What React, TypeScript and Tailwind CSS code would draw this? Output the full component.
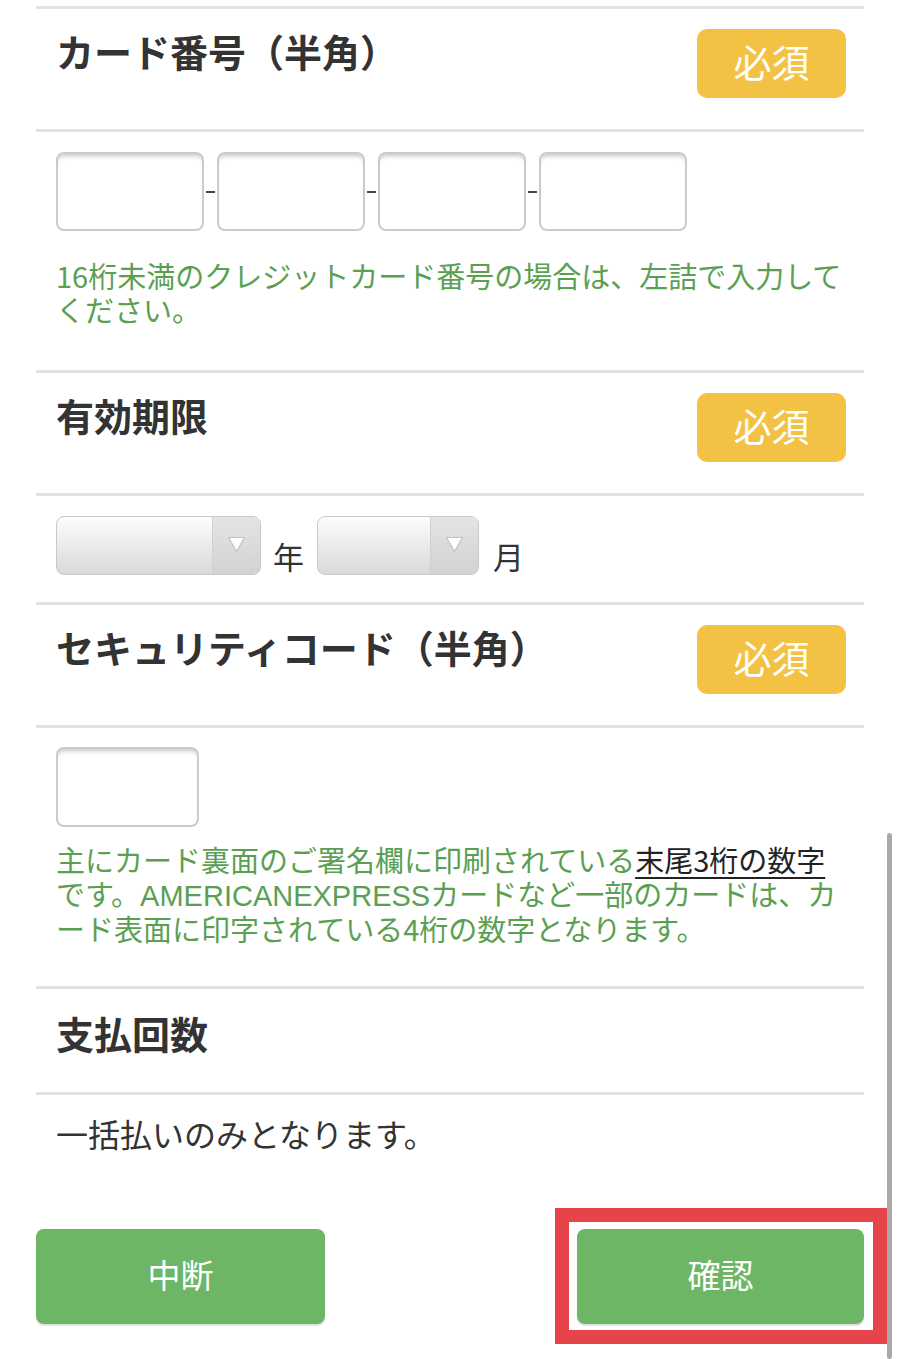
import React from "react";

const JP = '"Noto Sans CJK JP", "Noto Sans CJK SC", sans-serif';

function Divider() {
  return <div className="h-[3px] bg-[#e2e2e2]" />;
}

function Badge() {
  return (
    <div className="flex h-[69px] w-[149px] shrink-0 items-center justify-center rounded-[10px] bg-[#f3c244] pb-[6px] text-[38px] leading-none text-white">
      必須
    </div>
  );
}

function Header({ title }: { title: string }) {
  return (
    <div className="flex items-start justify-between pb-[31px] pl-[20px] pr-[18px] pt-[20px]">
      <h2 className="mt-[3px] text-[38px] font-bold leading-none text-[#333333]">{title}</h2>
      <Badge />
    </div>
  );
}

function Box({ className }: { className: string }) {
  return (
    <div
      className={
        "rounded-[8px] border-2 border-[#cbcbcb] bg-white shadow-[inset_0_5px_4px_-3px_rgba(0,0,0,0.22)] " +
        className
      }
    />
  );
}

function Dash() {
  return <div className="mx-[2px] h-[2px] w-[9px] bg-[#444444]" />;
}

function Arrow() {
  return (
    <svg width="19" height="17" viewBox="0 0 19 17">
      <path d="M1.5 1.5 L17.5 1.5 L9.5 15.5 Z" fill="#ffffff" stroke="#c2c2c2" strokeWidth="1.2" strokeLinejoin="round" />
    </svg>
  );
}

function Select({ wide }: { wide: boolean }) {
  return (
    <div
      className={
        wide
          ? "flex h-[59px] w-[205px] overflow-hidden rounded-[8px] border-[1.5px] border-[#c9c9c9] bg-[linear-gradient(to_bottom,#fdfdfd,#d9d9d9)]"
          : "flex h-[59px] w-[162px] overflow-hidden rounded-[8px] border-[1.5px] border-[#c9c9c9] bg-[linear-gradient(to_bottom,#fdfdfd,#d9d9d9)]"
      }
    >
      <div className="flex-1" />
      <div className="flex w-[48px] items-center justify-center border-l border-[#d0d0d0] bg-[linear-gradient(to_bottom,#e4e4e4,#d2d2d2)] pb-[3px]">
        <Arrow />
      </div>
    </div>
  );
}

export default function App() {
  return (
    <div className="relative h-[1359px] overflow-hidden bg-white" style={{ fontFamily: JP }}>
      <div className="px-[36px] pt-[6px]">
        <Divider />
        <Header title="カード番号（半角）" />
        <Divider />
        <div className="pb-[44px] pl-[20px] pt-[20px]">
          <div className="flex items-center">
            <Box className="h-[79px] w-[148px]" />
            <Dash />
            <Box className="h-[79px] w-[148px]" />
            <Dash />
            <Box className="h-[79px] w-[148px]" />
            <Dash />
            <Box className="h-[79px] w-[148px]" />
          </div>
          <p className="mt-[27px] whitespace-nowrap text-[29px] leading-[34px] text-[#5ba052]">
            16桁未満のクレジットカード番号の場合は、左詰で入力して
            <br />
            ください。
          </p>
        </div>
        <Divider />
        <Header title="有効期限" />
        <Divider />
        <div className="flex items-end pb-[27px] pl-[20px] pt-[20px]">
          <Select wide={true} />
          <span className="mb-[4px] ml-[12px] mr-[13px] text-[31px] leading-none text-[#333333]">年</span>
          <Select wide={false} />
          <span className="mb-[4px] ml-[14px] text-[31px] leading-none text-[#333333]">月</span>
        </div>
        <Divider />
        <Header title="セキュリティコード（半角）" />
        <Divider />
        <div className="pb-[41px] pl-[20px] pt-[19px]">
          <Box className="h-[80px] w-[143px]" />
          <p className="mt-[15px] whitespace-nowrap text-[29px] leading-[34px] text-[#5ba052]">
            主にカード裏面のご署名欄に印刷されている
            <span className="text-[#222222] underline decoration-[2px] underline-offset-[5px]">末尾3桁の数字</span>
            <br />
            です。
            <span className="leading-none" style={{ fontFamily: '"Liberation Sans", sans-serif' }}>
              AMERICANEXPRESS
            </span>
            カードなど一部のカードは、カ
            <br />
            ード表面に印字されている4桁の数字となります。
          </p>
        </div>
        <Divider />
        <div className="pb-[40px] pl-[20px] pt-[25px]">
          <h2 className="text-[38px] font-bold leading-none text-[#333333]">支払回数</h2>
        </div>
        <Divider />
        <div className="pl-[20px] pt-[18px]">
          <p className="text-[32px] leading-[40px] text-[#333333]">一括払いのみとなります。</p>
        </div>
        <div className="mt-[76px] flex justify-between">
          <button className="h-[95px] w-[289px] rounded-[8px] bg-[#6db665] pb-[4px] text-[33px] text-white shadow-[0_2px_1px_rgba(0,0,0,0.12)]">
            中断
          </button>
          <div className="relative">
            <div className="absolute -bottom-[20px] -left-[22px] -right-[23px] -top-[21px] border-[14px] border-[#e6434b]" />
            <button className="relative h-[95px] w-[287px] rounded-[8px] bg-[#6db665] pb-[4px] text-[33px] text-white shadow-[0_2px_1px_rgba(0,0,0,0.12)]">
              確認
            </button>
          </div>
        </div>
      </div>
      <div className="absolute left-[887px] top-[833px] h-[526px] w-[5px] rounded-[3px] bg-[#a9a9a9]" />
    </div>
  );
}
